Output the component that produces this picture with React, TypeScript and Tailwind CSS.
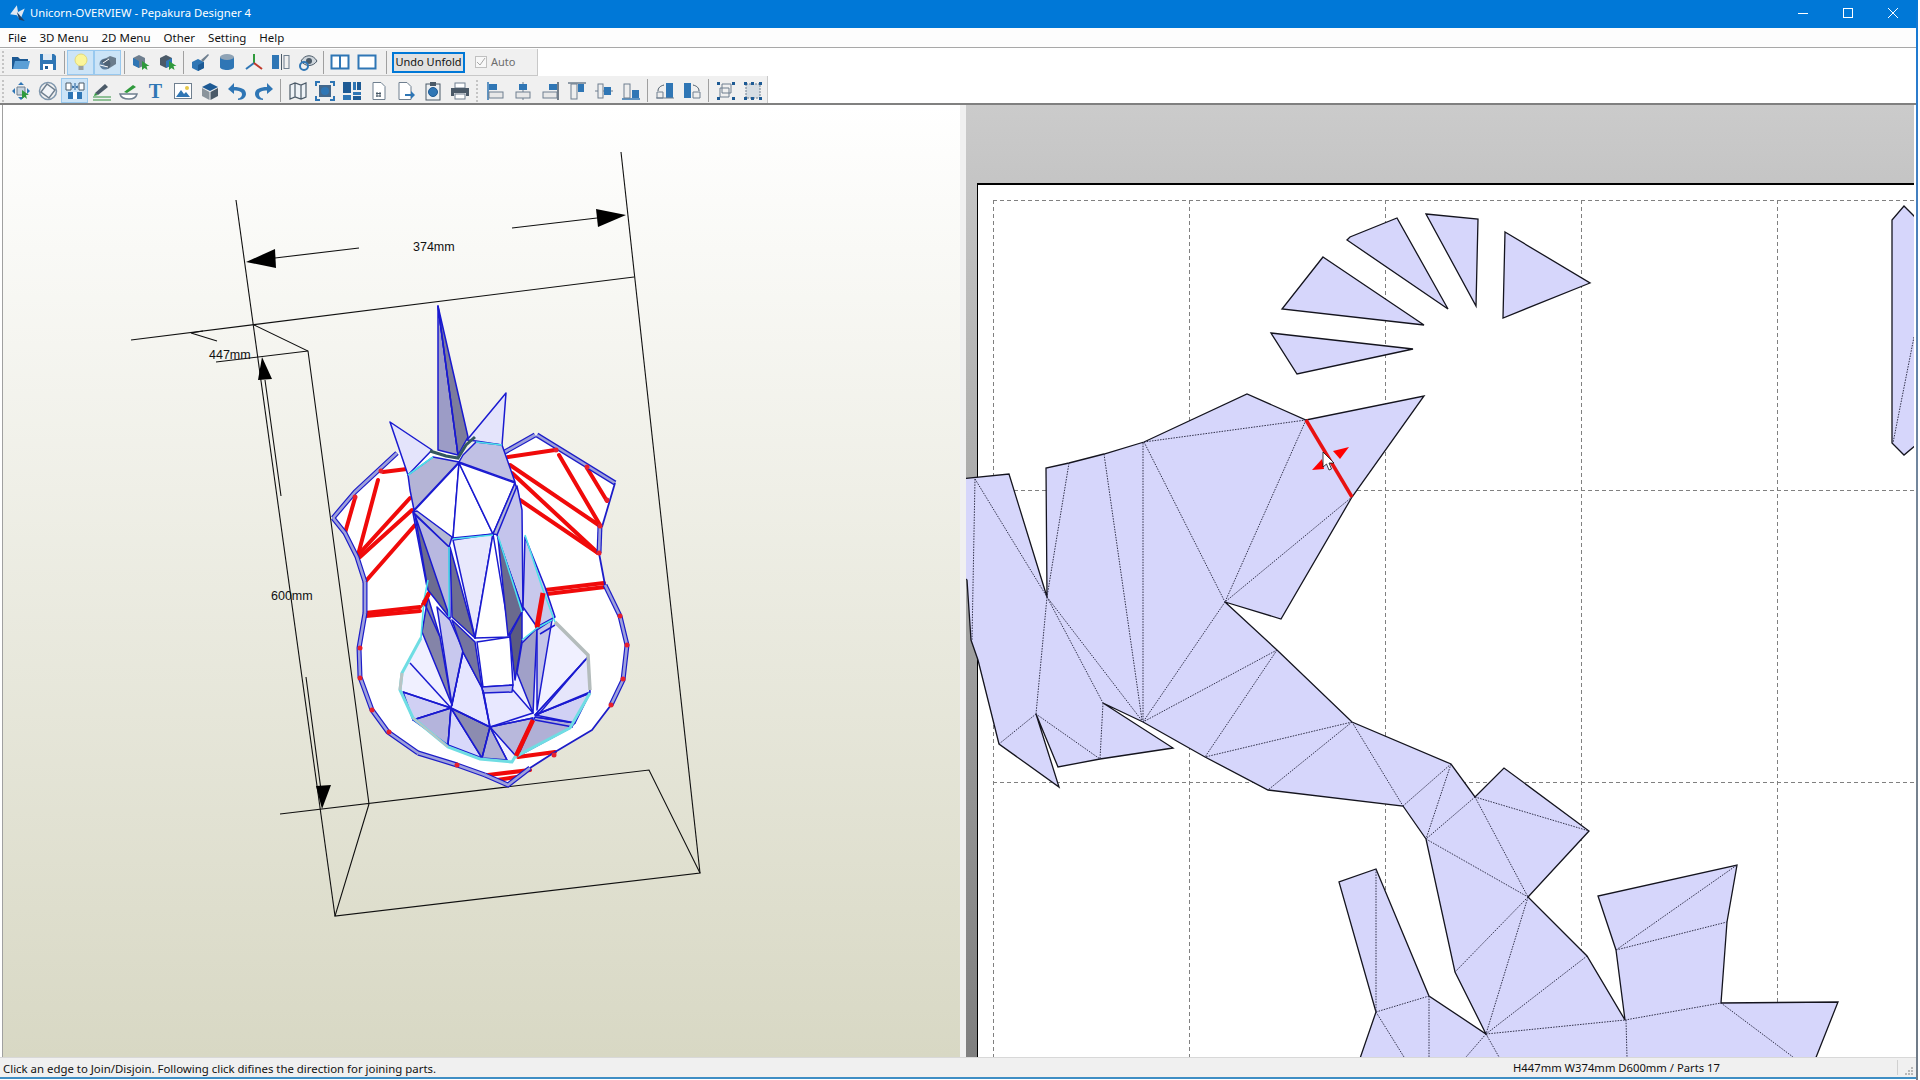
import React from 'react'

const B = '#2f76b5'
const D = '#1d5a94'
const G = '#6f7f8f'
const K = '#4b5a68'

// Toolbar icons, all drawn on a 20x20 box
const icons: Record<string, React.ReactNode> = {
  folder: <><path d="M1 5h6l2 2h8v2H6l-3 8H1z" fill={D} /><path d="M4 9h15l-2 8H2z" fill="#5b9fd6" /></>,
  save: <><path d="M2 2h14l2 2v14H2z" fill={B} /><rect x="5" y="2" width="9" height="6" fill="#dfeaf5" /><rect x="5" y="12" width="10" height="6" fill="#fff" /><rect x="7" y="14" width="3" height="3" fill={D} /></>,
  bulb: <><circle cx="10" cy="8" r="6" fill="#fbf59a" stroke="#e2d97a" /><rect x="7.5" y="14" width="5" height="4" fill="#9aa0a0" /></>,
  solid: <><circle cx="7" cy="12" r="5.5" fill="#5f7f9f" /><path d="M3 9l9-5 6 2v6l-8 5z" fill={K} opacity=".75" /><path d="M5 11l6-4M2 13l8 2" stroke="#fff" /></>,
  cubeA: <><path d="M2 6l6-3 6 3v7l-6 3-6-3z" fill={G} /><path d="M8 9v7l-6-3V6z" fill={B} /><path d="M11 9v9l2.5-2 3 2-1-4h3z" fill="#2f9a3c" /></>,
  cubeB: <><path d="M2 6l6-3 6 3v7l-6 3-6-3z" fill={K} /><path d="M8 9v7l6-3V6z" fill={B} /><path d="M11 9v9l2.5-2 3 2-1-4h3z" fill="#2f9a3c" /></>,
  cubePen: <><path d="M2 10l6-3 6 3v6l-6 3-6-3z" fill={B} /><path d="M8 13v6l6-3v-6z" fill={D} /><path d="M11 8l7-6 1 1-6 7z" fill={G} /></>,
  cylinder: <><path d="M3 5v10c0 4 14 4 14 0V5z" fill={B} /><ellipse cx="10" cy="5" rx="7" ry="3" fill="#8fa3b5" /></>,
  axes: <><path d="M10 11V2" stroke="#2f9a3c" strokeWidth="2" /><path d="M10 11l-8 6" stroke={B} strokeWidth="2" /><path d="M10 11l8 6" stroke="#c0392b" strokeWidth="2" /></>,
  mirror: <><rect x="1" y="3" width="7" height="14" fill={B} /><rect x="10" y="2" width="1" height="16" fill={K} /><rect x="13" y="3.5" width="5" height="13" fill="none" stroke={G} /></>,
  eye: <><path d="M3 9c4-7 12-7 16 0-4 6-12 6-16 0z" fill="#cfd6dc" stroke={K} /><circle cx="11" cy="9" r="3" fill={K} /><circle cx="6" cy="14" r="4" fill="none" stroke={B} strokeWidth="2" /></>,
  split: <path d="M1.5 3.5h17v13h-17zM10 3.5v13" fill="#fff" stroke={B} strokeWidth="2" />,
  single: <path d="M1.5 3.5h17v13h-17z" fill="#fff" stroke={B} strokeWidth="2" />,
  rotCursor: <><path d="M6 6h8v8H6z" fill="#c4d2de" stroke={G} /><path d="M10 1l-3 3h6zM10 19l-3-3h6zM1 10l3-3v6zM19 10l-3-3v6z" fill={B} /><path d="M11 9v9l2.500-2 2.500 2-1-4h3z" fill="#2f9a3c" /></>,
  rotSquare: <><circle cx="10" cy="10" r="8.500" fill="none" stroke="#7f97ad" strokeWidth="1.500" /><path d="M9 3l8 6-6 8-8-6z" fill="#f2f5f8" stroke={G} strokeWidth="1.500" /></>,
  join: <><path d="M1 2h5v7H1zM14 2h5v7h-5z" fill="#fff" stroke={K} /><path d="M3 11h14v7H3z" fill={B} /><rect x="8" y="11" width="4" height="7" fill="#fff" /><path d="M10 2v7M7 5l2 1-2 1M13 5l-2 1 2 1" stroke={D} fill="none" /></>,
  pen: <><path d="M3 12l10-9 3 3-10 8z" fill={K} /><path d="M3 12l3 2-4 1z" fill="#2f9a3c" /><path d="M1 16h18M1 19h18" stroke="#2f8f3c" strokeWidth="1.2" /></>,
  bowl: <><path d="M5 11l9-7 3 2-9 6z" fill="#2f9a3c" /><path d="M1 13h17c-1 4-4 5-8 5s-8-1-9-5z" fill="#fff" stroke={G} strokeWidth="1.5" /></>,
  image: <><rect x="1.5" y="2.5" width="17" height="15" fill="#fff" stroke={G} /><circle cx="14" cy="7" r="2" fill="#e6c84a" /><path d="M3 16l5-7 3 4 2-2 4 5z" fill={B} /></>,
  cubeColor: <><path d="M10 2l8 4-8 4-8-4z" fill={D} /><path d="M2 7l7.5 4v8L2 15z" fill="#8a949c" /><path d="M18 7l-7.5 4v8l7.5-4z" fill={K} /></>,
  undo: <path d="M7 2L1 8l6 5V9.500c5 0 8 1 8 4 0 2-2 4-4 4v1.500c5 0 8-3 8-6 0-5-5-7-12-7z" fill={B} />,
  redo: <path d="M13 2l6 6-6 5V9.500c-5 0-8 1-8 4 0 2 2 4 4 4v1.500c-5 0-8-3-8-6 0-5 5-7 12-7z" fill={B} />,
  map: <path d="M2 4l5-2 6 2 5-2v14l-5 2-6-2-5 2zM7 2v14M13 4v14" fill="#eef2f6" stroke={K} strokeWidth="1.2" />,
  frame: <><rect x="4" y="4" width="12" height="12" fill="#44688c" /><circle cx="10" cy="10" r="4" fill={B} /><path d="M1 5V1h4M15 1h4v4M19 15v4h-4M5 19H1v-4" fill="none" stroke={B} strokeWidth="2" /></>,
  grid: <><rect x="1" y="1" width="8" height="11" fill={D} /><rect x="1" y="14" width="8" height="5" fill={B} /><rect x="11" y="1" width="3" height="8" fill={B} /><rect x="15" y="1" width="4" height="8" fill={D} /><rect x="11" y="11" width="8" height="3" fill={B} /><rect x="11" y="15" width="8" height="4" fill={D} /></>,
  pageHash: <><path d="M4 1.500h8l4 4v13H4z" fill="#fff" stroke={G} /><path d="M8 11v5M11 11v5M7 12.500h5M7 15h5" stroke={K} /></>,
  pageArrow: <><path d="M3 1.500h8l4 4v13H3z" fill="#fff" stroke={G} /><path d="M9 13h6v-3l4 4-4 4v-3H9z" fill={B} /></>,
  clip: <><rect x="3" y="3" width="14" height="16" fill="#eef0f2" stroke={K} /><rect x="7" y="1" width="6" height="4" fill={K} /><circle cx="10" cy="11" r="4.500" fill={B} stroke={D} /></>,
  print: <><rect x="5" y="2" width="10" height="5" fill="#fff" stroke={G} /><path d="M1 7h18v8h-3v-3H4v3H1z" fill={K} /><rect x="5" y="13" width="10" height="5" fill="#fff" stroke={G} /></>,
  aL: <><path d="M2 1v18" stroke={B} strokeWidth="1.500" /><rect x="3" y="3" width="8" height="6" fill={B} /><rect x="3" y="11" width="14" height="6" fill="#e8e8e8" stroke={G} /></>,
  aC: <><path d="M10 1v18" stroke={G} /><rect x="6" y="3" width="8" height="6" fill={B} /><rect x="3" y="11" width="14" height="6" fill="#e8e8e8" stroke={G} /></>,
  aR: <><path d="M18 1v18" stroke={K} strokeWidth="1.500" /><rect x="9" y="3" width="8" height="6" fill={B} /><rect x="3" y="11" width="14" height="6" fill="#e8e8e8" stroke={G} /></>,
  aT: <><path d="M1 2h18" stroke={G} strokeWidth="1.500" /><rect x="4" y="3" width="6" height="15" fill="#eee" stroke={G} /><rect x="11" y="3" width="6" height="8" fill={B} /></>,
  aM: <><path d="M1 10h18" stroke={G} /><rect x="4" y="3" width="5" height="14" fill="#eee" stroke={G} /><rect x="10" y="6" width="7" height="8" fill={B} /></>,
  aB: <><path d="M1 18h18" stroke={B} strokeWidth="1.500" /><rect x="3" y="3" width="6" height="14" fill="#eee" stroke={G} /><rect x="11" y="9" width="7" height="8" fill={B} /></>,
  rotL: <><path d="M2 17V11h6v6z" fill="#eee" stroke={G} /><rect x="11" y="2" width="7" height="15" fill={B} /><path d="M9 4C5 5 3 7 3 10" fill="none" stroke={K} /><path d="M1 17h18" stroke={G} /></>,
  rotR: <><rect x="2" y="2" width="7" height="15" fill={B} /><path d="M11 17v-6h7v6z" fill="#eee" stroke={G} /><path d="M11 4c4 1 6 3 6 6" fill="none" stroke={K} /></>,
  gather: <><path d="M6 3h9v9H6zM4 7h9v9H4z" fill="none" stroke={G} /><path d="M1 1h3v3H1zM16 1h3v3h-3zM1 16h3v3H1zM16 16h3v3h-3z" fill={D} /></>,
  spread: <><rect x="3" y="3" width="14" height="14" fill="#d6dde3" stroke={G} strokeDasharray="2 1" /><path d="M1 1h3v3H1zM8 1h3v3H8zM16 1h3v3h-3zM1 16h3v3H1zM8 16h3v3H8zM16 16h3v3h-3z" fill={D} /></>,
}

function Tool({ name, active }: { name?: string; active?: boolean }) {
  return (
    <div className={`w-[27px] h-[25px] shrink-0 flex items-center justify-center ${active ? 'bg-[#cce4f7] border border-[#99c9ef]' : ''}`}>
      {name === 'text' ? (
        <span className="font-['Liberation_Serif'] font-bold text-[20px] leading-none text-[#2f76b5]">T</span>
      ) : (
        <svg width="20" height="20" viewBox="0 0 20 20">{name ? icons[name] : null}</svg>
      )}
    </div>
  )
}

function Sep({ w = 7 }: { w?: number }) {
  return (
    <div className="h-[23px] shrink-0 flex justify-center" style={{ width: w }}>
      <div className="w-px h-full bg-[#a0a0a0]" />
    </div>
  )
}

function Grip({ wide }: { wide?: boolean }) {
  return <div className={`w-[3px] h-[22px] shrink-0 border-l-2 border-dotted border-[#c4c4c4] ${wide ? 'mx-[3px]' : 'mr-[2px]'}`} />
}

const lavender = '#d6d6fb'

const parts = [
  '1505,232 1590,283 1503,318',
  '1426,214 1478,219 1476,306',
  '1397,218 1448,309 1347,240 1350,237',
  '1323,257 1424,325 1282,309',
  '1271,333 1413,349 1297,374',
  '1904,206 1922,224 1922,440 1904,455 1892,443 1892,220',
]

const mainOutline =
  '960,479 1009,474 1047,597 1046,468 1069,463 1104,454 1144,442 1247,394 1306,420 1424,396 1352,497 1281,619 1225,602 1277,650 1352,722 1451,764 1475,797 1504,768 1589,831 1528,897 1587,956 1625,1020 1616,950 1598,896 1737,865 1727,922 1721,1003 1838,1002 1811,1070 1356,1070 1376,1012 1339,882 1376,869 1429,996 1486,1034 1455,972 1426,839 1403,806 1268,790 1205,757 1143,722 1103,703 1173,748 1100,759 1058,767 1036,714 1059,787 999,744 978,660 971,640 967,580 960,575'

const folds = [
  [1144, 442, 1306, 420], [1306, 420, 1225, 602], [1352, 497, 1225, 602], [1144, 442, 1225, 602],
  [1143, 443, 1143, 722], [1104, 454, 1142, 720], [1069, 463, 1047, 597], [975, 479, 972, 640],
  [975, 479, 1047, 597], [1047, 597, 1036, 714], [1047, 597, 1143, 722], [1047, 597, 1103, 703],
  [1036, 714, 999, 744], [1036, 714, 1100, 759], [1103, 703, 1100, 759], [1225, 602, 1143, 722],
  [1277, 650, 1143, 722], [1277, 650, 1205, 757], [1352, 722, 1205, 757], [1352, 722, 1268, 790],
  [1352, 722, 1403, 806], [1451, 764, 1403, 806], [1451, 764, 1426, 839], [1475, 797, 1426, 839],
  [1475, 797, 1528, 897], [1475, 797, 1589, 831], [1426, 839, 1528, 897], [1528, 897, 1455, 972],
  [1528, 897, 1486, 1034], [1587, 956, 1486, 1034], [1486, 1034, 1625, 1020], [1376, 869, 1376, 1012],
  [1376, 1012, 1429, 996], [1429, 996, 1429, 1057], [1376, 1012, 1404, 1057], [1486, 1034, 1466, 1057],
  [1486, 1034, 1499, 1057], [1616, 950, 1737, 865], [1616, 950, 1727, 922], [1625, 1020, 1721, 1003],
  [1626, 1020, 1627, 1057], [1721, 1003, 1793, 1057], [1914, 337, 1893, 443],
]

function PaperDrawing() {
  return (
    <svg className="absolute inset-0" width="948" height="952" viewBox="966 105 948 952">
      {/* page grid */}
      <g stroke="#808080" strokeDasharray="4 3" fill="none">
        {[993.5, 1189.5, 1385.5, 1581.5, 1777.5].map(x => <path key={x} d={`M${x} 200V1057`} />)}
        {[200.500, 490.500, 782.500].map(y => <path key={y} d={`M993 ${y}H1914`} />)}
      </g>
      {parts.map(p => <polygon key={p} points={p} fill={lavender} stroke="#14141e" strokeWidth="1.300" />)}
      <polygon points={mainOutline} fill={lavender} stroke="#14141e" strokeWidth="1.300" />
      <g stroke="#30304a" strokeWidth="1" strokeDasharray="1.500 1.200">
        {folds.map(([a, b, c, d]) => <line key={`${a}-${b}-${c}-${d}`} x1={a} y1={b} x2={c} y2={d} />)}
      </g>
      <line x1="1306" y1="420" x2="1352" y2="497" stroke="#e81212" strokeWidth="3.500" />
      <polygon points="1333,451 1349,447 1340,459" fill="#f00" />
      <polygon points="1312,470 1322,459 1324,469" fill="#f00" />
      {/* mouse pointer */}
      <polygon points="1323,452 1323,467 1326.500,464 1329,470 1331.500,469 1329,463 1334,463" fill="#fff" stroke="#111" strokeWidth=".8" />
    </svg>
  )
}

const redLines = [
  [508, 457, 555, 450], [510, 465, 600, 526], [512, 473, 598, 553], [520, 500, 598, 553],
  [559, 455, 600, 525], [587, 468, 607, 501], [545, 590, 604, 583], [547, 594, 605, 587],
  [543, 593, 537, 627], [383, 472, 407, 469], [378, 480, 358, 555], [355, 498, 345, 533],
  [410, 498, 358, 555], [412, 510, 360, 557], [415, 525, 365, 582], [420, 607, 365, 613],
  [420, 611, 366, 616], [429, 593, 423, 605], [533, 720, 515, 756], [518, 757, 555, 752],
  [488, 775, 530, 770], [497, 780, 517, 777],
]

const redDots = [
  [360, 648], [360, 678], [372, 710], [389, 732], [457, 765], [620, 616], [627, 645], [623, 679],
  [611, 705], [554, 755], [381, 471], [355, 497], [556, 450], [587, 467], [607, 500], [600, 526], [599, 553],
]

const bands = [
  '333,518 355,492 397,453', '503,453 535,435', '537,435 615,483', '600,525 599,553', '605,585 620,616',
  '620,616 627,645 623,680 611,705', '530,768 508,785 485,775', '485,775 457,765 418,753',
  '418,753 388,732 372,710 360,677 359,648 365,613', '365,613 365,582', '365,582 357,557 345,533 333,518',
]

const thinEdges = ['615,483 602,527', '599,553 605,585', '611,705 592,730 555,752 530,768']

const faces: [string, string][] = [
  // horn
  ['438,306 438,450 458,455', '#9c9cc6'],
  ['438,306 458,455 468,437', '#7c7c9c'],
  // ears
  ['390,422 432,450 408,475', '#e4e4fb'],
  ['506,393 502,445 476,441 467,440', '#e4e4fb'],
  // crown
  ['408,475 433,457 459,462 414,510 410,490', '#b4b4d6'],
  ['476,442 502,445 515,482 459,462 463,455', '#c0c0e4'],
  // forehead
  ['459,463 413,512 453,538', '#ffffff'],
  ['459,463 453,538 493,534', '#ffffff'],
  ['459,463 493,534 515,483', '#ffffff'],
  ['413,512 417,511 452,537 449,547', '#b4b8d4'],
  ['515,483 518,492 500,535 493,534', '#b4b8d4'],
]

const faceLower: [string, string][] = [
  // muzzle facets
  ['403,692 451,708 413,720', '#d0d0f4'],
  ['413,720 451,708 448,745', '#b4b4dc'],
  ['451,708 448,745 482,758', '#d8d8fa'],
  ['451,708 490,727 482,758', '#8c8cb0'],
  ['490,727 482,758 507,760', '#b0b0d4'],
  ['490,727 515,755 533,718', '#b8b8dc'],
  ['535,717 575,723 570,728 518,756', '#b0b0d6'],
  ['535,715 590,693 575,723', '#d0d0f4'],
  ['535,715 588,657 590,692', '#e6e6fb'],
  ['451,708 463,652 482,688 490,727', '#e6e6ff'],
  ['483,690 513,690 533,713 490,727', '#e8e8ff'],
  // nose bridge
  ['453,540 493,534 475,638', '#e8e8fc'],
  ['493,534 510,637 475,638', '#ffffff'],
  ['477,642 510,637 513,685 483,687', '#ffffff'],
  ['482,687 513,685 512,692 483,693', '#b8b8ec'],
  // cheeks
  ['413,513 449,547 450,618 427,587', '#b8b8e0'],
  ['415,515 428,590 450,618', '#6c6c90'],
  ['450,547 475,638 452,617', '#6e6e92'],
  ['497,535 517,486 522,510 523,610', '#c4c4ec'],
  ['498,538 523,610 508,636', '#6a6a8e'],
  ['525,537 545,587 555,617 537,627 523,607', '#c8c8ec'],
  ['422,632 452,705 440,637 428,597', '#8484a8'],
  ['437,607 450,620 463,650 452,705', '#c8c8ee'],
  ['452,620 475,642 482,688 463,652', '#7474a0'],
  ['522,612 510,635 515,680 522,640', '#5a5a80'],
  ['522,643 537,628 533,713 517,673', '#a0a0c8'],
  ['537,628 552,620 537,710', '#c4c4e8'],
]

const cyanEdges = [
  '408,475 433,457', '476,442 502,445', '453,539 493,535', '449,547 449,617', '498,536 522,612',
  '421,638 424,600 428,580', '525,535 543,590 555,622', '537,628 552,620', '522,640 537,628',
]

const modelLines = [
  [410, 663, 451, 708], [403, 692, 451, 708], [413, 720, 451, 708], [448, 745, 451, 708],
  [451, 708, 490, 727], [490, 727, 482, 758], [490, 727, 507, 760], [490, 727, 533, 718],
  [535, 715, 588, 657], [538, 715, 585, 660], [535, 715, 590, 693], [535, 717, 575, 723],
  [535, 720, 573, 727], [483, 690, 490, 727], [463, 652, 451, 708], [423, 600, 440, 637],
  [537, 630, 552, 620], [540, 634, 555, 625], [458, 455, 438, 306],
]

function ModelDrawing() {
  return (
    <svg className="absolute inset-0" width="957" height="952" viewBox="3 105 957 952">
      {/* bounding box */}
      <g stroke="#101010" strokeWidth="1.100" fill="none">
        <path d="M131 340L634 277" />
        <path d="M236 200L335 916" />
        <path d="M621 152L700 873" />
        <path d="M254 325L308 351L369 804" />
        <path d="M216 362L308 351" />
        <path d="M280 814L649 770L700 873L335 916L369 804" />
        <path d="M275 258L359 248M512 228L597 218" />
        <path d="M191 333L217 341M191 333L203 331" />
        <path d="M265 380L281 496M306 677L321 790" />
      </g>
      <polygon points="246,262 275,249 276,268" fill="#000" />
      <polygon points="626,215 596,209 598,227" fill="#000" />
      <polygon points="262,357 258,380 272,379" fill="#000" />
      <polygon points="322,809 316,786 331,785" fill="#000" />
      <g fontFamily="'Liberation Sans', sans-serif" fontSize="12.500" fill="#111">
        <text x="413" y="251">374mm</text>
        <text x="209" y="359">447mm</text>
        <text x="271" y="600">600mm</text>
      </g>

      {/* unicorn */}
      <polygon
        points="333,518 355,492 397,453 420,450 503,453 535,435 615,483 602,527 600,553 605,585 620,616 627,645 623,680 611,705 592,730 555,752 530,768 508,785 485,775 457,765 418,753 388,732 372,710 360,677 359,648 365,613 365,582 357,557 345,533"
        fill="#fff"
      />
      <g stroke="#f00a0a" strokeWidth="4" strokeLinecap="round">
        {redLines.map(([a, b, c, d]) => <line key={`${a}-${b}-${c}`} x1={a} y1={b} x2={c} y2={d} />)}
      </g>
      <g fill="none" strokeLinejoin="round">
        {bands.map(p => <polyline key={p} points={p} stroke="#1c1cc8" strokeWidth="5" />)}
        {bands.map(p => <polyline key={`i${p}`} points={p} stroke="#9ea1dc" strokeWidth="2.600" />)}
        {thinEdges.map(p => <polyline key={p} points={p} stroke="#1c1cc8" strokeWidth="1.800" />)}
      </g>
      {redDots.map(([x, y]) => <circle key={`${x}-${y}`} cx={x} cy={y} r="2.500" fill="#e8202c" />)}

      <polygon
        points="421,638 402,673 400,690 413,718 448,747 480,759 512,762 515,757 570,728 590,690 588,655 555,622 520,640 450,640"
        fill="#f0f0ff"
      />

      <g stroke="#1a1ad0" strokeWidth="1.500" strokeLinejoin="round">
        {faces.map(([p, f]) => <polygon key={p} points={p} fill={f} />)}
        {faceLower.map(([p, f]) => <polygon key={p} points={p} fill={f} />)}
        {modelLines.map(([a, b, c, d]) => <line key={`${a}-${b}-${c}-${d}`} x1={a} y1={b} x2={c} y2={d} />)}
      </g>
      <polyline points="430,451 446,456 458,458 466,445 475,437" fill="none" stroke="#34585e" strokeWidth="3" />
      {/* muzzle rim */}
      <polyline points="421,638 402,673 400,690 413,718 448,747 480,759 512,762 515,757 570,728 590,693" fill="none" stroke="#6fdde3" strokeWidth="3" />
      <polyline points="555,622 573,640 588,655 590,690" fill="none" stroke="#b4bcbc" strokeWidth="3.500" />
      <polyline points="402,673 400,690" fill="none" stroke="#b8c4c4" strokeWidth="3" />
      <polyline points="413,718 448,747" fill="none" stroke="#b8c4c4" strokeWidth="2" />
      <g fill="none" stroke="#4fe3ea" strokeWidth="1.600">
        {cyanEdges.map(p => <polyline key={p} points={p} />)}
      </g>
      <line x1="533" y1="720" x2="516" y2="756" stroke="#f00a0a" strokeWidth="4.500" />
      <line x1="543" y1="593" x2="537" y2="627" stroke="#f00a0a" strokeWidth="5" />
      <line x1="429" y1="593" x2="423" y2="605" stroke="#f00a0a" strokeWidth="4" />
    </svg>
  )
}

export default function App() {
  return (
    <div className="w-[1920px] h-[1080px] overflow-hidden flex bg-white font-['Noto_Sans','Liberation_Sans',sans-serif] text-[11.5px] text-[#111]">
      <div className="w-[1916px] h-full flex flex-col">
        {/* Title bar */}
        <div className="h-[28px] shrink-0 bg-[#0078d7] text-white flex items-center pl-[9px] pb-[2px]">
          <svg width="18" height="18" viewBox="0 0 16 16">
            <path d="M1 9l6-8 1 6 6-3-4 10-3-4z" fill="#dfe8f2" />
            <path d="M7 7l7 8-5-1z" fill="#1d3f66" />
          </svg>
          <span className="ml-[3px] text-[11.25px]">Unicorn-OVERVIEW - Pepakura Designer 4</span>
          <div className="ml-auto flex items-center h-full">
            <svg width="10" height="10" viewBox="0 0 10 10" className="mr-[35px]"><path d="M0 5.500h10" stroke="#fff" /></svg>
            <svg width="10" height="10" viewBox="0 0 10 10" className="mr-[35px]"><rect x=".5" y=".5" width="9" height="9" fill="none" stroke="#fff" /></svg>
            <svg width="10" height="10" viewBox="0 0 10 10" className="mr-[18px]"><path d="M0 0l10 10M10 0L0 10" stroke="#fff" /></svg>
          </div>
        </div>

        {/* Menu */}
        <div className="h-[19px] shrink-0 bg-[#fdfdfd] flex items-center gap-[13px] pl-[8px] border-b border-[#a8a8a8] box-content">
          {['File', '3D Menu', '2D Menu', 'Other', 'Setting', 'Help'].map(m => <span key={m}>{m}</span>)}
        </div>

        {/* Toolbars */}
        <div className="h-[28px] shrink-0 flex pt-px">
          <div className="w-[538px] h-[27px] bg-[#f0f0f0] border-b border-r border-[#c8c8c8] flex items-center pl-[2px]">
            <Grip />
            <Tool name="folder" />
            <Tool name="save" />
            <Sep w={6} />
            <Tool name="bulb" active />
            <Tool name="solid" active />
            <Sep w={6} />
            <Tool name="cubeA" />
            <Tool name="cubeB" />
            <Sep w={5} />
            <Tool name="cubePen" />
            <Tool name="cylinder" />
            <Tool name="axes" />
            <Tool name="mirror" />
            <Tool name="eye" />
            <Sep w={5} />
            <Tool name="split" />
            <Tool name="single" />
            <Sep w={12} />
            <div className="w-[73px] h-[21px] shrink-0 border-2 border-[#0078d7] bg-[#e1e1e1] flex items-center justify-center text-[11px]">Undo Unfold</div>
            <div className="ml-[10px] w-[12px] h-[12px] border border-[#c0c0c0] bg-[#f8f8f8] flex items-center justify-center">
              <svg width="10" height="10" viewBox="0 0 10 10"><path d="M1 5l3 3 5-7" fill="none" stroke="#a8a8a8" /></svg>
            </div>
            <span className="ml-[4px] text-[11px] text-[#6d6d6d]">Auto</span>
          </div>
        </div>
        <div className="h-[27px] shrink-0 flex border-b-2 border-[#808080] box-content">
          <div className="w-[768px] bg-[#f0f0f0] border-r border-[#c8c8c8] flex items-center pl-[2px] pt-[2px]">
            <Grip />
            <Tool name="rotCursor" />
            <Tool name="rotSquare" />
            <Tool name="join" active />
            <Tool name="pen" />
            <Tool name="bowl" />
            <Tool name="text" />
            <Tool name="image" />
            <Tool name="cubeColor" />
            <Tool name="undo" />
            <Tool name="redo" />
            <Sep w={7} />
            <Tool name="map" />
            <Tool name="frame" />
            <Tool name="grid" />
            <Tool name="pageHash" />
            <Tool name="pageArrow" />
            <Tool name="clip" />
            <Tool name="print" />
            <Grip wide />
            <Tool name="aL" />
            <Tool name="aC" />
            <Tool name="aR" />
            <Tool name="aT" />
            <Tool name="aM" />
            <Tool name="aB" />
            <Sep />
            <Tool name="rotL" />
            <Tool name="rotR" />
            <Sep />
            <Tool name="gather" />
            <Tool name="spread" />
          </div>
        </div>

        {/* Work area */}
        <div className="flex-1 min-h-0 flex">
          <div className="w-[960px] shrink-0 pl-[2px]">
            <div className="relative h-full border-l border-[#a0a0a0] bg-linear-to-b from-[#ffffff] to-[#d8d8c4]">
              <ModelDrawing />
            </div>
          </div>
          <div className="w-[6px] shrink-0 bg-[#f0f0f0]" />
          <div className="relative w-[948px] shrink-0 bg-linear-to-b from-[#cbcbcb] to-[#7f7f7f] overflow-hidden pl-[11px] pt-[78px]">
            <div className="h-full bg-white border-l border-t-2 border-[#000]" />
            <PaperDrawing />
          </div>
        </div>

        {/* Status bar */}
        <div className="h-[20px] shrink-0 bg-[#f0f0f0] border-t border-[#d8d8d8] flex items-center pl-[3px] pt-[2px] relative">
          <span className="text-[11.4px]">Click an edge to Join/Disjoin. Following click difines the direction for joining parts.</span>
          <span className="absolute left-[1513px] text-[11.25px]">H447mm W374mm D600mm / Parts 17</span>
          <div className="absolute left-[1897px] top-[2px] bottom-[2px] w-px bg-[#d0d0d0]" />
          <svg className="absolute right-[2px] bottom-[1px]" width="10" height="10" viewBox="0 0 10 10">
            <path d="M7 1h2v2H7zM4 4h2v2H4zM7 4h2v2H7zM1 7h2v2H1zM4 7h2v2H4zM7 7h2v2H7z" fill="#b8b8b8" />
          </svg>
        </div>
        <div className="h-[2px] shrink-0 bg-[#3f8ec4]" />
        <div className="h-px shrink-0 bg-white" />
      </div>
      <div className="w-[2px] h-full shrink-0 bg-linear-to-b from-[#0078d7] via-[#7b8794] to-[#6f7b88]" />
    </div>
  )
}
